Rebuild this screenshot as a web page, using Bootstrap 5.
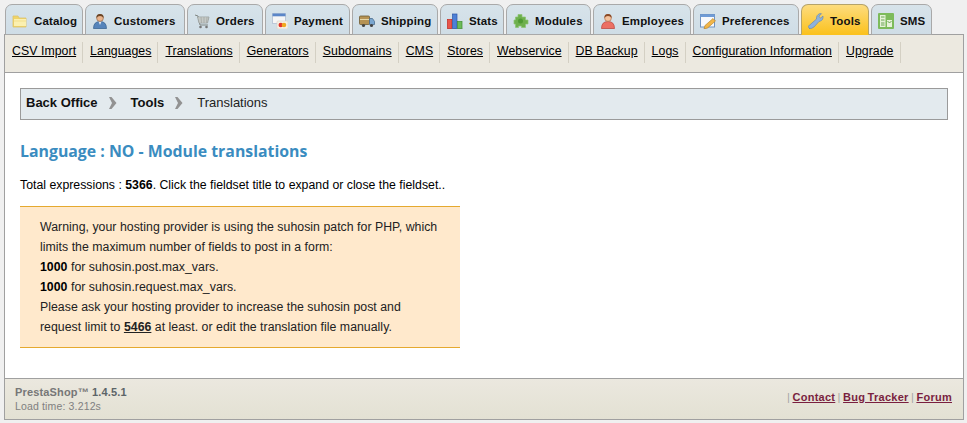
<!DOCTYPE html>
<html lang="en"><head><meta charset="utf-8"><title>Translations</title>
<link rel="stylesheet" href="https://cdn.jsdelivr.net/npm/bootstrap@5.3.0/dist/css/bootstrap.min.css">
<style>
html,body{height:423px;overflow:hidden}
body{background:#f0f0f0;font:12.3px/1.25 "Liberation Sans",Arial,sans-serif;color:#000}
.shell{padding:4px 3px 3px 4px;height:423px}
.tabstrip{padding-left:1px;height:30px;gap:2px;position:relative;z-index:1}
.tabitem{height:31px;border:1px solid #a9a9a9;border-radius:7px 7px 0 0;background:linear-gradient(#d7e3ea,#cfdde6);font-weight:700;font-size:11.5px;letter-spacing:.15px;color:#111;padding:3px 0 0 6px;gap:6px;text-decoration:none;white-space:nowrap}
.tabitem svg{width:16px;height:16px;flex:none}
.tabitem.on{background:linear-gradient(#fddc7e,#fbc21f);border-color:#b5a36a;border-bottom-color:#fbc21f}
.tabitem:nth-child(1){width:78px}.tabitem:nth-child(2){width:100px}.tabitem:nth-child(3){width:76px}.tabitem:nth-child(4){width:85px}
.tabitem:nth-child(5){width:86px}.tabitem:nth-child(6){width:64px}.tabitem:nth-child(7){width:85px}.tabitem:nth-child(8){width:98px}
.tabitem:nth-child(9){width:106px}.tabitem:nth-child(10){width:68px}.tabitem:nth-child(11){width:61px}
.subbar{background:#ece9e0;border:1px solid #a0a0a0;height:39px;padding-bottom:2px}
.subbar a{color:#000;font-size:12.3px;letter-spacing:.055px;text-decoration:underline;padding:0 6px 0 7px;border-right:1px solid #d4d0c4;height:21px;line-height:19px}
.pagebody{background:#fff;border-left:1px solid #a0a0a0;border-right:1px solid #a0a0a0;height:305px;padding:15px 15px 0 15px}
.crumbs{background:#e3eaee;border:1px solid #9a9a9a;height:32px;padding:0 0 2px 5px;font-size:13px;gap:10px;color:#222}
.crumbs b{color:#111}
.crumbs svg{width:9px;height:12px;margin-right:4px}
.pagetitle{color:#3a8cc0;font:700 15.85px/20px "Open Sans","Noto Sans",sans-serif;margin:21px 0 16px}
.totals{line-height:16px;margin:0 0 13px}
.warnbox{width:440px;height:142px;background:#ffe9cc;border-top:1px solid #e5a92f;border-bottom:1px solid #e5a92f;padding:10px 20px;line-height:20px;color:#222;letter-spacing:.03px}
.warnbox a{color:#222;font-weight:700;text-decoration:underline}
.warnbox b{color:#000}
.pagefoot{height:42px;background:linear-gradient(#ebe8df,#e3e1d3);border:1px solid #a0a0a0;padding:6px 11px 0 10px;color:#6a6a6a}
.brandline{font-weight:700;font-size:11px;letter-spacing:.15px;line-height:15px;color:#777}
.brandline em{font-style:normal;color:#5c6468}
.loadtime{font-size:10.5px;letter-spacing:.15px;line-height:13px;color:#808080}
.footlinks{font-size:11px;padding-top:6px;color:#a5a5a5;letter-spacing:.27px;word-spacing:-1px}
.footlinks a{color:#7a1f3f;font-weight:700}
</style></head><body>
<div class="shell">
<nav class="tabstrip d-flex">
<a class="tabitem d-flex align-items-center" href="#"><svg viewBox="0 0 16 16"><path d="M1 3h5l1 2h7v9H1z" fill="#f0d468" stroke="#dcc36c" stroke-width=".8"/><path d="M2 6h12v7H2z" fill="#fbf0b0"/><path d="M2 8h12" stroke="#f3df8c"/></svg>Catalog</a>
<a class="tabitem d-flex align-items-center" href="#"><svg viewBox="0 0 16 16"><path d="M1.500 15.500q0-7 6.500-7t6.500 7z" fill="#5584bb" stroke="#2f5d8c" stroke-width=".7"/><path d="M6.500 8.500L8 12l1.500-3.500z" fill="#dfe8f0"/><circle cx="8" cy="5" r="3.400" fill="#eab48d" stroke="#8a5a3a" stroke-width=".6"/><path d="M4.500 5q-.5-4 3.500-4t3.500 4q-1-2-3.500-2T4.500 5z" fill="#6b4526"/></svg>Customers</a>
<a class="tabitem d-flex align-items-center" href="#"><svg viewBox="0 0 16 16"><path d="M1 2l3 1 2 9h8" fill="none" stroke="#7f8581"/><path d="M3.500 4H15l-1.500 6H5z" fill="#d9dcd9" stroke="#8e9490" stroke-width=".7"/><path d="M4 6h10.500M4.500 8h9.500M7 4l.5 6M10 4v6M13 4l-.5 6" stroke="#989e9a" stroke-width=".6"/><circle cx="6.500" cy="14" r="1.300" fill="#777"/><circle cx="12.500" cy="14" r="1.300" fill="#777"/></svg>Orders</a>
<a class="tabitem d-flex align-items-center" href="#"><svg viewBox="0 0 16 16"><rect x=".5" y=".5" width="13" height="10" fill="#f6f6f6" stroke="#bcc8d8"/><rect x=".5" y=".5" width="13" height="2.800" fill="#5b86c8"/><rect x="5" y="8" width="11" height="8" rx="1" fill="#f6f0e4" stroke="#d8d2c6" stroke-width=".6"/><circle cx="8.800" cy="12" r="2.300" fill="#e2332a"/><circle cx="12" cy="12" r="2.300" fill="#f0a81e"/></svg>Payment</a>
<a class="tabitem d-flex align-items-center" href="#"><svg viewBox="0 0 16 16"><rect x=".5" y="3" width="10" height="8.500" rx="1" fill="#b59253" stroke="#6d5a34" stroke-width=".8"/><path d="M1 6.500h9" stroke="#e6d6a6"/><path d="M10.500 5.500h3l2 3v3h-5z" fill="#7aa6cf" stroke="#4b6d8e" stroke-width=".8"/><circle cx="4.500" cy="12.500" r="1.600" fill="#444"/><circle cx="12.500" cy="12.500" r="1.600" fill="#444"/></svg>Shipping</a>
<a class="tabitem d-flex align-items-center" href="#"><svg viewBox="0 0 16 16"><path d="M0 15.500h16" stroke="#b8c4cc"/><rect x=".5" y="6.500" width="4.500" height="9" fill="#e8564c" stroke="#c2281f" stroke-width=".7"/><rect x="5.500" y="1" width="4.500" height="14.500" fill="#4d80d6" stroke="#2b57a8" stroke-width=".7"/><rect x="10.500" y="8.500" width="4.500" height="7" fill="#6cbb59" stroke="#3f8e30" stroke-width=".7"/></svg>Stats</a>
<a class="tabitem d-flex align-items-center" href="#"><svg viewBox="0 0 16 16"><path d="M5 1.500h4v2.500h3.500v3H15v4h-2.500v3.500H8.500V13h-3v1.500H2.500V11H1V7h1.500V4H5z" fill="#6eb04d" stroke="#8cc474" stroke-width=".7"/><circle cx="7.500" cy="8" r="2.500" fill="#4f9a33"/></svg>Modules</a>
<a class="tabitem d-flex align-items-center" href="#"><svg viewBox="0 0 16 16"><path d="M1.500 15.500q0-7 6.500-7t6.500 7z" fill="#ec7064" stroke="#b93f36" stroke-width=".7"/><circle cx="8" cy="5" r="3.400" fill="#f4c29c" stroke="#a8623e" stroke-width=".6"/><path d="M4.500 5q-.5-4 3.500-4t3.500 4q-1-2-3.500-2T4.500 5z" fill="#8a4a26"/></svg>Employees</a>
<a class="tabitem d-flex align-items-center" href="#"><svg viewBox="0 0 16 16"><rect x=".5" y="1.500" width="14" height="12.500" fill="#f7f9fc" stroke="#6f93c2"/><rect x=".5" y="1.500" width="14" height="2.500" fill="#6f9bd6"/><path d="M4 16l1-3.500 8-7 2.500 2.500-8 7z" fill="#f2b648" stroke="#b07c22" stroke-width=".6"/></svg>Preferences</a>
<a class="tabitem on d-flex align-items-center" href="#"><svg viewBox="0 0 16 16"><path d="M1.500 15.500L0 13.500 8.500 6Q8 2 12 .5l1.500.2L11 3.200l1.500 2 2.500-2.200q.7 4.500-4 5.500l-5 5.500q-2.500 2-5 1.500z" fill="#8eb2dc" stroke="#5f83b0" stroke-width=".6"/></svg>Tools</a>
<a class="tabitem d-flex align-items-center" href="#"><svg viewBox="0 0 16 16"><rect width="16" height="16" rx="1" fill="#7dbb5b"/><rect x="2" y="2" width="5.500" height="12" fill="#e6f3d8"/><rect x="9" y="7" width="5" height="7" fill="#e6f3d8"/><path d="M3 4h3.500M3 7h3.500M3 10h3.500M3 12h3.500M9.500 8l2 2 2-2" stroke="#4d8f36" stroke-width=".8" fill="none"/></svg>SMS</a>
</nav>
<div class="subbar d-flex align-items-center">
<a href="#">CSV Import</a><a href="#">Languages</a><a href="#">Translations</a><a href="#">Generators</a><a href="#">Subdomains</a><a href="#">CMS</a><a href="#">Stores</a><a href="#">Webservice</a><a href="#">DB Backup</a><a href="#">Logs</a><a href="#">Configuration Information</a><a href="#">Upgrade</a>
</div>
<main class="pagebody">
<div class="crumbs d-flex align-items-center"><b>Back Office</b><svg viewBox="0 0 9 12"><path d="M1 0h2.500l5 6-5 6H1l3-6z" fill="#929292"/></svg><b>Tools</b><svg viewBox="0 0 9 12"><path d="M1 0h2.500l5 6-5 6H1l3-6z" fill="#929292"/></svg><span>Translations</span></div>
<h2 class="pagetitle">Language : NO - Module translations</h2>
<p class="totals">Total expressions : <b>5366</b>. Click the fieldset title to expand or close the fieldset..</p>
<div class="warnbox">Warning, your hosting provider is using the suhosin patch for PHP, which<br>limits the maximum number of fields to post in a form:<br><b>1000</b> for suhosin.post.max_vars.<br><b>1000</b> for suhosin.request.max_vars.<br>Please ask your hosting provider to increase the suhosin post and<br>request limit to <a href="#">5466</a> at least. or edit the translation file manually.</div>
</main>
<footer class="pagefoot d-flex justify-content-between">
<div><div class="brandline">PrestaShop™ <em>1.4.5.1</em></div><div class="loadtime">Load time: 3.212s</div></div>
<div class="footlinks">| <a href="#">Contact</a> | <a href="#">Bug Tracker</a> | <a href="#">Forum</a></div>
</footer>
</div>
<script src="https://cdn.jsdelivr.net/npm/bootstrap@5.3.0/dist/js/bootstrap.bundle.min.js"></script>
</body></html>
